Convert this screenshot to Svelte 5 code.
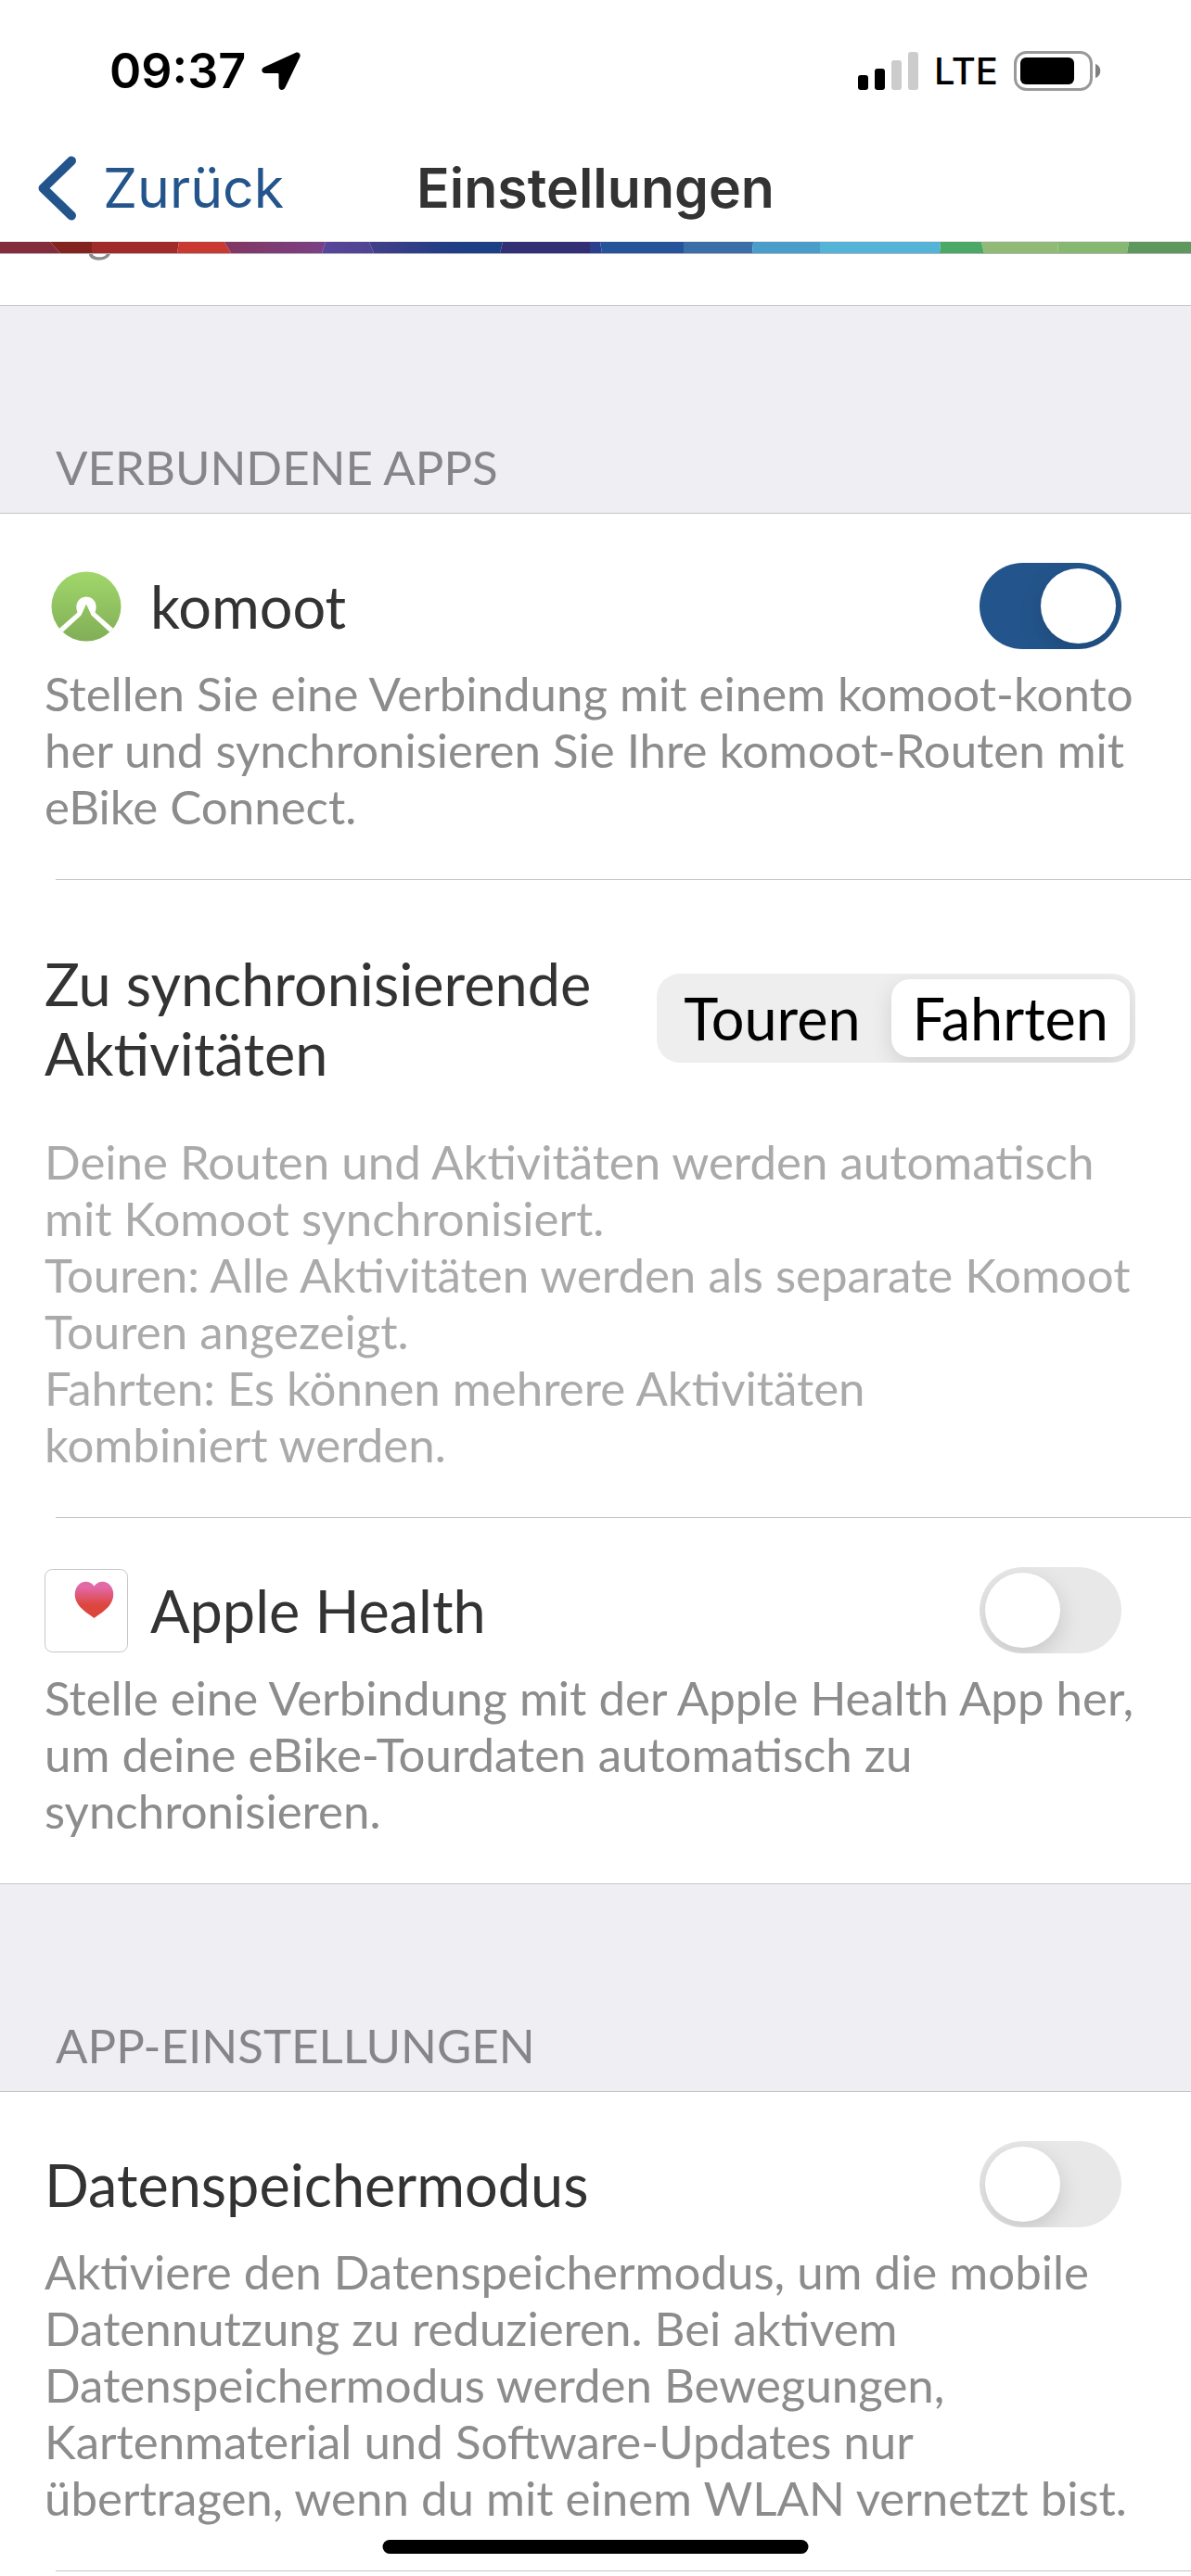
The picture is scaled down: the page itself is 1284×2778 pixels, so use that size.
<script lang="ts">
	let komoot = $state(true);
	let appleHealth = $state(false);
	let dataSaver = $state(false);
	let syncMode = $state('Fahrten');

	const syncModes = ['Touren', 'Fahrten'];
	const signalBars = [16, 23, 32, 41];
	const signalStrength = 2;
</script>

<header class="header">
	<div class="status">
		<div class="status-side">
			<span class="time">09:37</span>
			<svg class="location" viewBox="0 0 42 41" aria-hidden="true">
				<path
					d="M36.5 1 3 16.2C-1 18-.4 23 4 23h13.2q1.3 0 1.3 1.3V37c0 4.600 5.200 5.400 7 1.200L41.300 5.400C42.600 2 39.800-.5 36.500 1Z"
				/>
			</svg>
		</div>
		<div class="status-side">
			<svg class="signal" viewBox="0 0 65 41" aria-hidden="true">
				{#each signalBars as height, i (i)}
					<rect
						x={i * 18}
						y={41 - height}
						width="11"
						{height}
						rx="3"
						fill={i < signalStrength ? '#000' : '#ccc'}
					/>
				{/each}
			</svg>
			<span class="network">LTE</span>
			<svg class="battery" viewBox="0 0 94 43" aria-hidden="true">
				<rect x="1.500" y="1.500" width="82" height="40" rx="12" fill="none" stroke="#999" stroke-width="3" />
				<rect x="7" y="7" width="58" height="29" rx="6" />
				<path d="M88 14c7 2 7 13 0 15Z" fill="#808080" />
			</svg>
		</div>
	</div>
	<nav class="nav">
		<button class="back" type="button">
			<svg class="chevron" viewBox="0 0 42 70" aria-hidden="true">
				<path d="M36 5.500 5.500 35l30.500 29.500" />
			</svg>
			Zurück
		</button>
		<h1 class="title">Einstellungen</h1>
	</nav>
	<svg class="supergraphic" viewBox="0 0 1284 12" preserveAspectRatio="none" aria-hidden="true">
		<defs>
			<linearGradient id="plum"><stop stop-color="#823662" /><stop offset="1" stop-color="#7b4086" /></linearGradient>
			<linearGradient id="violet"><stop stop-color="#58469b" /><stop offset="1" stop-color="#4e4491" /></linearGradient>
			<linearGradient id="navy"><stop stop-color="#433f8a" /><stop offset=".6" stop-color="#203d85" /><stop offset="1" stop-color="#184085" /></linearGradient>
		</defs>
		<path fill="#852c3c" d="M0 0h54l11 12H0Z" />
		<path fill="#832320" d="M54 0h45v12H65Z" />
		<path fill="#a12b2b" d="M99 0h94l-2 12H99Z" />
		<path fill="#c93831" d="M193 0h49l7 12h-58Z" />
		<path fill="url(#plum)" d="M242 0h109l-4 12h-98Z" />
		<path fill="url(#violet)" d="M351 0h47l5 12h-56Z" />
		<path fill="url(#navy)" d="M398 0h144l-3 12H403Z" />
		<path fill="#322f74" d="M542 0h94v12h-97Z" />
		<path fill="#2c3f8f" d="M636 0h11l2 12h-13Z" />
		<path fill="#26549a" d="M647 0h90v12h-88Z" />
		<path fill="#3a6ea8" d="M737 0h75l-1 12h-74Z" />
		<path fill="#499dca" d="M812 0h72v12h-73Z" />
		<path fill="#53b4d8" d="M884 0h130l-1 12H884Z" />
		<path fill="#4ca866" d="M1014 0h44l3 12h-48Z" />
		<path fill="#90ba76" d="M1058 0h82l1 12h-80Z" />
		<path fill="#86b871" d="M1140 0h77l-2 12h-74Z" />
		<path fill="#5f985f" d="M1217 0h67v12h-69Z" />
	</svg>
</header>

<main class="list">
	<!-- Tail of the row that is scrolled underneath the header -->
	<div class="scrolled-row">
		<p class="description">fügen.</p>
	</div>

	<h2 class="group-header">Verbundene Apps</h2>
	<section class="group">
		<div class="row">
			<div class="row-head">
				<svg class="app-icon" viewBox="0 0 90 90" aria-hidden="true">
					<defs>
						<linearGradient id="komoot-green" x2="0" y2="1">
							<stop stop-color="#a1d76b" />
							<stop offset="1" stop-color="#81ae57" />
						</linearGradient>
						<clipPath id="komoot-disc"><circle cx="45" cy="45" r="37.500" /></clipPath>
					</defs>
					<circle cx="45" cy="45" r="37.500" fill="url(#komoot-green)" />
					<path
						clip-path="url(#komoot-disc)"
						fill="#fff"
						d="M10 74 35.500 51.500C32 43 36.500 34.500 45 34.500S58 43 54.500 51.500L80 74l-4 4L50.500 54.500 45 42.500 39.500 54.500 14 78Z"
					/>
				</svg>
				<label class="row-title" for="komoot">komoot</label>
				<input class="switch" id="komoot" type="checkbox" role="switch" bind:checked={komoot} />
			</div>
			<p class="description">
				Stellen Sie eine Verbindung mit einem komoot-konto her und synchronisieren Sie Ihre
				komoot-Routen mit eBike Connect.
			</p>
		</div>
		<hr class="separator" />

		<div class="row roomy">
			<div class="row-head">
				<span class="row-title" id="sync-label">Zu synchronisierende Aktivitäten</span>
				<div class="segmented" role="radiogroup" aria-labelledby="sync-label">
					{#each syncModes as mode (mode)}
						<label class="segment" class:selected={syncMode === mode}>
							<input type="radio" name="sync-mode" value={mode} bind:group={syncMode} />
							{mode}
						</label>
					{/each}
				</div>
			</div>
			<p class="description light">
				Deine Routen und Aktivitäten werden automatisch mit Komoot synchronisiert.<br />
				Touren: Alle Aktivitäten werden als separate Komoot Touren angezeigt.<br />
				Fahrten: Es können mehrere Aktivitäten <span class="keep">kombiniert werden.</span>
			</p>
		</div>
		<hr class="separator" />

		<div class="row">
			<div class="row-head">
				<svg class="app-icon" viewBox="0 0 90 90" aria-hidden="true">
					<defs>
						<linearGradient id="heart" x2="0" y2="1">
							<stop offset=".15" stop-color="#e268a8" />
							<stop offset=".65" stop-color="#dd463d" />
						</linearGradient>
					</defs>
					<rect x=".5" y=".5" width="89" height="89" rx="8" fill="#fff" stroke="#c6c6c8" />
					<path
						fill="url(#heart)"
						d="M53.500 18.500C50 13 43 12.500 38.500 15.500 32 20 31 30 35.500 37 39 43 45 47 53.500 53 62 47 68 43 71.500 37 76 30 75 20 68.500 15.500 64 12.500 57 13 53.500 18.500Z"
					/>
				</svg>
				<label class="row-title" for="health">Apple Health</label>
				<input class="switch" id="health" type="checkbox" role="switch" bind:checked={appleHealth} />
			</div>
			<p class="description">
				Stelle eine Verbindung mit der Apple Health App her, um deine eBike-Tourdaten automatisch
				zu synchronisieren.
			</p>
		</div>
	</section>

	<h2 class="group-header">App-Einstellungen</h2>
	<section class="group">
		<div class="row">
			<div class="row-head">
				<label class="row-title" for="data-saver">Datenspeichermodus</label>
				<input class="switch" id="data-saver" type="checkbox" role="switch" bind:checked={dataSaver} />
			</div>
			<p class="description">
				Aktiviere den Datenspeichermodus, um die mobile Datennutzung zu reduzieren. Bei aktivem
				Datenspeichermodus werden Bewegungen, Kartenmaterial und Software-Updates nur übertragen,
				wenn du mit einem WLAN vernetzt bist.
			</p>
		</div>
		<hr class="separator" />
	</section>
</main>

<div class="home-indicator"></div>

<style>
	:global(body) {
		margin: 0;
		background: #fff;
		color: #333;
		font-family: Lato, 'Open Sans', sans-serif;
	}
	.header {
		border-bottom: 1px solid #b4b4b6;
		background: #fff;
		font-family: Inter, Roboto, sans-serif;
	}
	.status {
		display: flex;
		align-items: center;
		justify-content: space-between;
		box-sizing: border-box;
		height: 145px;
		padding: 8px 97px 0 118px;
		color: #000;
	}
	.status-side {
		display: flex;
		align-items: center;
		gap: 17px;
	}
	.time {
		font-size: 52px;
		font-weight: 600;
	}
	.location {
		width: 42px;
		height: 41px;
	}
	.signal {
		width: 65px;
		height: 41px;
	}
	.network {
		font-size: 40px;
		font-weight: 500;
	}
	.battery {
		width: 94px;
		height: 43px;
	}
	.nav {
		display: grid;
		grid-template-columns: 1fr auto 1fr;
		align-items: center;
		height: 115px;
		border-bottom: 1px solid #dcdcdc;
	}
	.back {
		display: flex;
		align-items: center;
		gap: 28px;
		padding: 0 0 0 41px;
		border: 0;
		background: none;
		color: #23558c;
		font: 400 59px/75px Inter, Roboto, sans-serif;
		cursor: pointer;
	}
	.chevron {
		width: 42px;
		height: 70px;
		fill: none;
		stroke: currentColor;
		stroke-width: 10;
		stroke-linecap: round;
		stroke-linejoin: round;
	}
	.title {
		margin: 0;
		font-size: 59px;
		font-weight: 600;
		line-height: 75px;
	}
	.supergraphic {
		display: block;
		width: 100%;
		height: 12px;
	}
	.scrolled-row {
		display: flex;
		align-items: flex-end;
		box-sizing: border-box;
		height: 55px;
		padding: 0 52px 47px 48px;
		overflow: hidden;
	}
	.group-header {
		box-sizing: border-box;
		height: 225px;
		margin: 0;
		padding: 143px 60px 0;
		border: solid #c6c6c8;
		border-width: 1px 0;
		background: #efeef3;
		color: #86858a;
		font-size: 51px;
		font-weight: 400;
		line-height: 61px;
		text-transform: uppercase;
	}
	.row {
		padding: 53px 52px 48px 48px;
	}
	/* Hairline between rows, inset from the left edge */
	.separator {
		height: 1px;
		margin: 0 0 0 60px;
		border: 0;
		background: #c6c6c8;
	}
	.row-head {
		display: flex;
		align-items: center;
		gap: 24px;
		min-height: 93px;
		margin-bottom: 17px;
	}
	.roomy {
		padding-top: 74px;
	}
	.roomy .row-head {
		margin-bottom: 49px;
	}
	.app-icon {
		flex: none;
		width: 90px;
		height: 90px;
	}
	.row-title {
		flex: 1;
		font-size: 63px;
		line-height: 75px;
	}
	.description {
		margin: 0;
		color: #8c8c8c;
		font-size: 51px;
		line-height: 61px;
	}
	.light {
		color: #aaa;
	}
	.keep {
		white-space: nowrap;
	}
	.switch {
		flex: none;
		display: flex;
		box-sizing: border-box;
		width: 153px;
		height: 93px;
		margin: 0 23px 0 0;
		padding: 6px;
		border-radius: 47px;
		background: #e8e8e8;
		appearance: none;
		overflow: hidden;
		cursor: pointer;
	}
	.switch::before {
		content: '';
		width: 81px;
		height: 81px;
		border-radius: 50%;
		background: #fff;
		box-shadow: 0 8px 24px rgb(0 0 0 / 15%);
	}
	.switch:checked {
		justify-content: flex-end;
		background: #23558c;
	}
	.segmented {
		flex: none;
		display: flex;
		gap: 10px;
		margin-right: 8px;
		padding: 6px;
		border-radius: 25px;
		background: #eee;
		overflow: hidden;
	}
	.segment {
		padding: 4px 23px 5px;
		border-radius: 20px;
		color: #000;
		font-size: 63px;
		line-height: 75px;
		cursor: pointer;
	}
	.segment input {
		position: absolute;
		opacity: 0;
	}
	.selected {
		background: #fff;
		box-shadow: 0 8px 24px rgb(0 0 0 / 12%);
	}
	.home-indicator {
		position: fixed;
		bottom: 24px;
		left: 50%;
		width: 459px;
		height: 15px;
		border-radius: 8px;
		background: #000;
		transform: translateX(-50%);
	}
</style>
